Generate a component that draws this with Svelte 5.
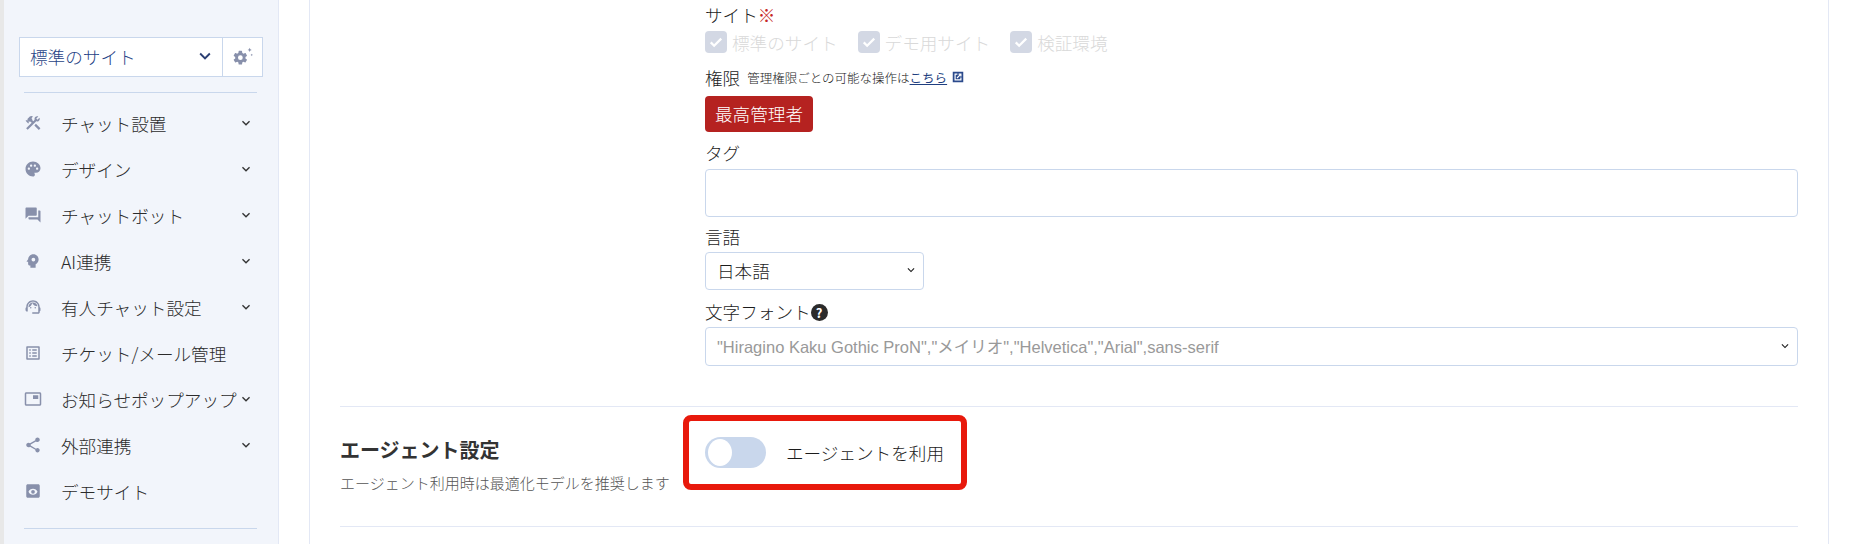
<script>
  // サイドメニュー定義。path は 24x24 の Material 系アイコン。
  const menu = [
    { label: 'チャット設置', open: true, d: 'M13.783 15.172l2.121-2.121 5.996 5.996-2.121 2.121zM17.5 10c1.93 0 3.5-1.57 3.5-3.5 0-.58-.16-1.12-.41-1.6l-2.7 2.7-1.49-1.49 2.7-2.7c-.48-.25-1.02-.41-1.6-.41C15.57 3 14 4.57 14 6.5c0 .41.08.8.21 1.16l-1.85 1.85-1.78-1.78.71-.71-1.41-1.41L12 3.49c-1.17-1.17-3.07-1.17-4.24 0L4.22 7.03l1.41 1.41H2.81l-.71.71 3.54 3.54.71-.71V9.15l1.41 1.41.71-.71 1.78 1.78-7.41 7.41 2.12 2.12L16.34 9.79c.36.13.75.21 1.16.21z' },
    { label: 'デザイン', open: true, d: 'M12 2C6.49 2 2 6.49 2 12s4.49 10 10 10c1.38 0 2.5-1.12 2.5-2.5 0-.61-.23-1.2-.64-1.67-.08-.1-.13-.21-.13-.33 0-.28.22-.5.5-.5H16c3.31 0 6-2.69 6-6 0-4.96-4.49-9-10-9zm5.5 11c-.83 0-1.5-.67-1.5-1.5s.67-1.5 1.5-1.5 1.5.67 1.5 1.5-.67 1.5-1.5 1.5zm-3-4c-.83 0-1.5-.67-1.5-1.5S13.67 6 14.5 6s1.5.67 1.5 1.5S15.33 9 14.5 9zM5 11.5c0-.83.67-1.5 1.5-1.5s1.5.67 1.5 1.5S7.33 13 6.5 13 5 12.33 5 11.5zm6-4c0 .83-.67 1.5-1.5 1.5S8 8.33 8 7.5 8.67 6 9.5 6s1.5.67 1.5 1.5z' },
    { label: 'チャットボット', open: true, d: 'M21 6h-2v9H6v2c0 .55.45 1 1 1h11l4 4V7c0-.55-.45-1-1-1zm-4 6V3c0-.55-.45-1-1-1H3c-.55 0-1 .45-1 1v14l4-4h10c.55 0 1-.45 1-1z' },
    { label: 'AI連携', open: true, d: 'M12.5 3C8.75 3 5.7 5.94 5.52 9.64L3.6 12.2c-.25.33 0 .8.4.8h1.5v3c0 1.1.9 2 2 2h1v3h7v-4.68c2.36-1.12 4-3.53 4-6.32 0-3.87-3.13-7-7-7zm0 4.5a2.5 2.5 0 1 1 0 5 2.5 2.5 0 0 1 0-5z' },
    { label: '有人チャット設定', open: true, d: 'M21 12.22C21 6.73 16.74 3 12 3c-4.69 0-9 3.65-9 9.28-.6.34-1 .98-1 1.72v2c0 1.1.9 2 2 2h1v-6.1c0-3.87 3.13-7 7-7s7 3.13 7 7V19h-8v2h8c1.1 0 2-.9 2-2v-1.22c.59-.31 1-.92 1-1.61v-2.3c0-.67-.41-1.28-1-1.65zM9 12a1 1 0 1 0 0 2 1 1 0 0 0 0-2zm6 0a1 1 0 1 0 0 2 1 1 0 0 0 0-2zM18 11.03C17.52 8.18 15.04 6 12.05 6c-3.03 0-6.29 2.51-6.03 6.45 2.47-1.01 4.33-3.21 4.86-5.89 1.31 2.63 4 4.44 7.12 4.47z' },
    { label: 'チケット/メール管理', open: false, d: 'M19 5v14H5V5h14m1.1-2H3.9c-.5 0-.9.4-.9.9v16.2c0 .4.4.9.9.9h16.2c.4 0 .9-.5.9-.9V3.9c0-.5-.5-.9-.9-.9zM11 7h6v2h-6V7zm0 4h6v2h-6v-2zm0 4h6v2h-6zM7 7h2v2H7zm0 4h2v2H7zm0 4h2v2H7z' },
    { label: 'お知らせポップアップ', open: true, d: 'M21 3H3c-1.1 0-2 .9-2 2v14c0 1.1.9 2 2 2h18c1.1 0 2-.9 2-2V5c0-1.1-.9-2-2-2zm0 16H3V5h18v14zM12 7h7v5h-7z' },
    { label: '外部連携', open: true, d: 'M18 16.08c-.76 0-1.44.3-1.96.77L8.91 12.7c.05-.23.09-.46.09-.7s-.04-.47-.09-.7l7.05-4.11c.54.5 1.25.81 2.04.81 1.66 0 3-1.34 3-3s-1.34-3-3-3-3 1.34-3 3c0 .24.04.47.09.7L8.04 9.81C7.5 9.31 6.79 9 6 9c-1.66 0-3 1.34-3 3s1.34 3 3 3c.79 0 1.5-.31 2.04-.81l7.12 4.16c-.05.21-.08.43-.08.65 0 1.61 1.31 2.92 2.92 2.92 1.61 0 2.92-1.31 2.92-2.92s-1.31-2.92-2.92-2.92z' },
    { label: 'デモサイト', open: false, d: 'M19 3H5c-1.11 0-2 .9-2 2v14c0 1.1.89 2 2 2h14c1.1 0 2-.89 2-2V5c0-1.1-.9-2-2-2zM12 9c2.73 0 5.06 1.66 6 4-.94 2.34-3.27 4-6 4s-5.06-1.66-6-4c.94-2.34 3.27-4 6-4zm0 1.5a2.5 2.5 0 1 0 0 5 2.5 2.5 0 0 0 0-5z' }
  ];
  const sites = ['標準のサイト', 'デモ用サイト', '検証環境'];
  const chevron = 'M7.41 8.59 12 13.17l4.59-4.58L18 10l-6 6-6-6z';
</script>

<div class="page">
  <aside class="side">
    <div class="site-picker">
      <div class="site-select">
        <span>標準のサイト</span>
        <svg class="site-chev" viewBox="0 0 24 24"><path d={chevron} /></svg>
      </div>
      <div class="site-gear">
        <svg viewBox="0 0 24 24"><path d="M19.4 13c.04-.32.1-.66.1-1s-.06-.68-.1-1l2.1-1.6c.2-.15.25-.42.12-.64l-2-3.46c-.12-.22-.38-.3-.6-.22l-2.5 1c-.52-.4-1.08-.73-1.7-.98l-.38-2.65A.5.5 0 0 0 13.95 2h-4a.5.5 0 0 0-.5.42l-.37 2.65c-.62.25-1.18.58-1.7.98l-2.5-1c-.22-.08-.48 0-.6.22l-2 3.46c-.13.22-.07.49.12.64L4.5 11c-.04.32-.1.66-.1 1s.06.68.1 1l-2.1 1.6c-.2.15-.25.42-.12.64l2 3.46c.12.22.38.3.6.22l2.5-1c.52.4 1.08.73 1.7.98l.37 2.65c.04.24.25.42.5.42h4c.25 0 .46-.18.5-.42l.37-2.65c.62-.25 1.18-.58 1.7-.98l2.5 1c.22.08.48 0 .6-.22l2-3.46c.13-.22.07-.49-.12-.64zM12 15.5a3.5 3.5 0 1 1 0-7 3.5 3.5 0 0 1 0 7z" transform="translate(-1 3) scale(.82)" /><path d="M20 1l.8 1.7 1.7.8-1.7.8-.8 1.7-.8-1.7-1.7-.8 1.7-.8zM22.500 8l.5 1 1 .5-1 .5-.5 1-.5-1-1-.5 1-.5z" /></svg>
      </div>
    </div>
    <hr class="side-rule" />
    <nav>
      {#each menu as item}
        <div class="nav-row">
          <svg class="nav-icon" viewBox="0 0 24 24"><path fill-rule="evenodd" d={item.d} /></svg>
          <span class="nav-label">{item.label}</span>
          {#if item.open}
            <svg class="nav-chev" viewBox="0 0 24 24"><path d={chevron} /></svg>
          {/if}
        </div>
      {/each}
    </nav>
    <hr class="side-rule bottom" />
  </aside>

  <main class="content">
    <section class="fields">
      <div class="label first">サイト<span class="req">※</span></div>
      <div class="checks">
        {#each sites as site}
          <label class="check">
            <span class="box">
              <svg viewBox="0 0 24 24"><path d="M5 12.5l4.5 4.5L19 7.5" /></svg>
            </span>
            {site}
          </label>
        {/each}
      </div>

      <div class="label perm">
        権限
        <small>管理権限ごとの可能な操作は<a href="#top">こちら</a></small>
        <svg class="ext" viewBox="0 0 24 24"><path fill-rule="evenodd" d="M3 3h18v18H3zM6 6v12h12v-5h-2v3H8V8h3V6zm7 0v2h1.6l-5 5L11 14.400l5-5V11h2V6z" /></svg>
      </div>
      <div class="badge">最高管理者</div>

      <div class="label tag-label">タグ</div>
      <div class="input tag"></div>

      <div class="label lang-label">言語</div>
      <div class="input select lang">
        <span>日本語</span>
        <svg viewBox="0 0 24 24"><path d={chevron} /></svg>
      </div>

      <div class="label font-label">文字フォント<span class="help">?</span></div>
      <div class="input select font">
        <span>"Hiragino Kaku Gothic ProN","メイリオ","Helvetica","Arial",sans-serif</span>
        <svg viewBox="0 0 24 24"><path d={chevron} /></svg>
      </div>
    </section>

    <section class="agent">
      <div class="agent-head">
        <h3>エージェント設定</h3>
        <p>エージェント利用時は最適化モデルを推奨します</p>
      </div>
      <div class="agent-switch">
        <span class="toggle"><span class="knob"></span></span>
        <span>エージェントを利用</span>
        <span class="mark"></span>
      </div>
    </section>
  </main>
</div>

<style>
  :global(body) {
    margin: 0;
    background: #fff;
  }

  .page {
    display: flex;
    width: 1853px;
    height: 544px;
    overflow: hidden;
    background: #fff;
    color: #1c1c1c;
    font-family: "Noto Sans CJK JP", "Liberation Sans", sans-serif;
    font-size: 17.6px;
    font-weight: 300;
  }

  /* サイドバー */
  .side {
    box-sizing: border-box;
    width: 279px;
    flex: none;
    padding: 37px 15px 0 15px;
    background: #f2f5fb;
    border-left: 4px solid #e8e8e8;
    border-right: 1px solid #e3e8f5;
  }

  .site-picker {
    display: flex;
    height: 40px;
    box-sizing: border-box;
    background: #fff;
    border: 1px solid #c9d7ec;
  }

  .site-select {
    flex: 1;
    display: flex;
    align-items: center;
    justify-content: space-between;
    padding: 0 6px 2px 10px;
    border-right: 1px solid #c9d7ec;
    color: #1f4386;
  }

  .site-chev {
    width: 22px;
    height: 22px;
    fill: #2b3f73;
  }

  .site-gear {
    width: 39px;
    display: flex;
    align-items: center;
    justify-content: center;
  }

  .site-gear svg {
    width: 20px;
    height: 20px;
    fill: #8890ab;
  }

  .side-rule {
    margin: 15px 6px 0 5px;
    border: 0;
    border-top: 1px solid #c9d7ec;
  }

  .side-rule.bottom {
    margin-top: 14px;
  }

  nav {
    padding-top: 7px;
  }

  .nav-row {
    display: flex;
    align-items: center;
    height: 46px;
    padding-left: 5px;
  }

  .nav-icon {
    width: 18px;
    height: 18px;
    flex: none;
    fill: #8890ab;
  }

  .nav-label {
    margin-left: 19px;
    white-space: nowrap;
    color: #2b2b2b;
  }

  .nav-chev {
    width: 16px;
    height: 16px;
    margin-left: auto;
    margin-right: 9px;
    fill: #333;
    flex: none;
  }

  /* メイン */
  .content {
    box-sizing: border-box;
    width: 1520px;
    margin-left: 30px;
    padding: 0 30px;
    border-left: 1px solid #e3e8f5;
    border-right: 1px solid #e3e8f5;
  }

  .fields {
    box-sizing: border-box;
    padding: 0 0 40px 365px;
    border-bottom: 1px solid #e3e8f5;
  }

  .label {
    line-height: 24px;
  }

  .label.first {
    margin-top: 3px;
  }

  .req {
    color: #c62828;
  }

  .checks {
    display: flex;
    gap: 20px;
    height: 24px;
    margin-top: 3px;
  }

  .check {
    display: flex;
    align-items: center;
    gap: 5px;
    color: #d9d9d9;
  }

  .box {
    width: 22px;
    height: 22px;
    border-radius: 4px;
    background: #d3d8e4;
    display: flex;
    align-items: center;
    justify-content: center;
  }

  .box svg {
    width: 18px;
    height: 18px;
    fill: none;
    stroke: #fff;
    stroke-width: 3;
  }

  .label.perm {
    display: flex;
    align-items: center;
    margin-top: 12px;
  }

  .label.perm small {
    margin-left: 7px;
    font-size: 12.5px;
    font-weight: 300;
  }

  .label.perm a {
    color: #1f3f80;
    font-weight: 400;
    text-decoration: underline;
  }

  .ext {
    width: 14px;
    height: 14px;
    margin-left: 4px;
    margin-top: -3px;
    fill: #2b4a8c;
  }

  .badge {
    width: max-content;
    height: 36px;
    line-height: 35px;
    margin-top: 6px;
    padding: 0 10px;
    border-radius: 4px;
    background: #b52220;
    color: #fff;
  }

  .label.tag-label {
    margin-top: 9px;
  }

  .input {
    box-sizing: border-box;
    border: 1px solid #c9d7ec;
    border-radius: 4px;
    background: #fff;
  }

  .tag {
    height: 48px;
    margin-top: 4px;
  }

  .label.lang-label {
    margin-top: 8px;
  }

  .select {
    display: flex;
    align-items: center;
    justify-content: space-between;
    padding: 0 5px 2px 11px;
  }

  .select svg {
    width: 14px;
    height: 14px;
    fill: #222;
    flex: none;
  }

  .lang {
    width: 219px;
    height: 38px;
    margin-top: 3px;
  }

  .label.font-label {
    display: flex;
    align-items: center;
    margin-top: 10px;
  }

  .help {
    width: 17px;
    height: 17px;
    border-radius: 50%;
    background: #2b2b2b;
    color: #fff;
    font-size: 13px;
    font-weight: 700;
    line-height: 17px;
    text-align: center;
  }

  .font {
    height: 39px;
    margin-top: 3px;
    color: #999;
    font-family: "Liberation Sans", "Noto Sans CJK JP", sans-serif;
    font-size: 16.5px;
    font-weight: 400;
  }

  .agent {
    display: flex;
    box-sizing: border-box;
    height: 120px;
    border-bottom: 1px solid #e3e8f5;
  }

  .agent-head {
    width: 365px;
    flex: none;
    padding-top: 29px;
  }

  h3 {
    margin: 0;
    font-size: 20px;
    line-height: 28px;
    font-weight: 700;
    color: #333;
  }

  p {
    margin: 9px 0 0;
    font-size: 15px;
    line-height: 20px;
    color: #555;
  }

  .agent-switch {
    position: relative;
    display: flex;
    align-items: center;
    gap: 20px;
    height: 31px;
    margin-top: 30px;
  }

  .toggle {
    display: block;
    width: 61px;
    height: 31px;
    border-radius: 16px;
    background: #c9d7ec;
  }

  .knob {
    display: block;
    width: 24px;
    height: 27px;
    margin: 2px 0 0 3px;
    border-radius: 50%;
    background: #fff;
  }

  /* 赤枠の注釈 */
  .mark {
    position: absolute;
    left: -22px;
    top: -22px;
    width: 284px;
    height: 75px;
    border: 6px solid #e8190c;
    border-radius: 8px;
    box-sizing: border-box;
  }
</style>
